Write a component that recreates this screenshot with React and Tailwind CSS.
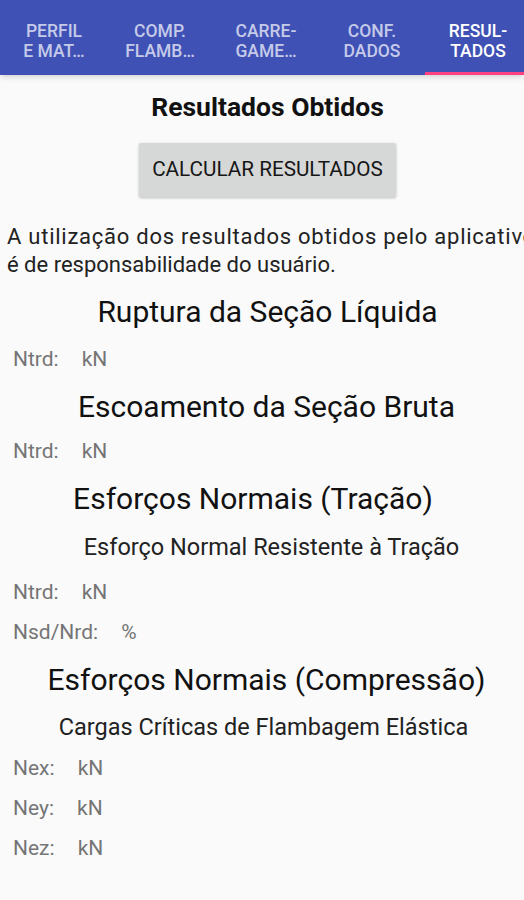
import React from "react";

const tabs = [
  { l1: "PERFIL", l2: "E MAT…" },
  { l1: "COMP.", l2: "FLAMB…" },
  { l1: "CARRE-", l2: "GAME…" },
  { l1: "CONF.", l2: "DADOS" },
  { l1: "RESUL-", l2: "TADOS", active: true },
];

const Row = ({ label, unit, className = "" }) => (
  <div className={`flex items-center h-[40px] pl-[13px] text-[21px] text-[#757575] ${className}`}>
    <span>{label}</span>
    <span className="ml-[23px]">{unit}</span>
  </div>
);

const Heading = ({ children, className = "" }) => (
  <h2 className={`h-[36px] leading-[36px] text-center text-[30px] text-[#111] whitespace-nowrap ${className}`}>
    {children}
  </h2>
);

const SubHeading = ({ children, className = "" }) => (
  <h3 className={`h-[30px] leading-[30px] text-center text-[23.5px] text-[#222] whitespace-nowrap ${className}`}>
    {children}
  </h3>
);

export default function App() {
  return (
    <div
      className="w-[524px] h-[900px] overflow-hidden bg-[#fafafa]"
      style={{ fontFamily: "Roboto, 'Liberation Sans', sans-serif" }}
    >
      {/* Tabs */}
      <div className="h-[75px] bg-[#3f51b5] flex pl-[1px] overflow-hidden shadow-md relative z-10">
        {tabs.map((t, i) => (
          <div
            key={i}
            className={`w-[106px] shrink-0 flex flex-col items-center justify-center pt-[9px] text-[17.5px] font-medium leading-[20px] ${
              t.active
                ? "text-white border-b-[3px] border-[#ff4081]"
                : "text-[#c5cae9] border-b-[3px] border-transparent"
            }`}
          >
            <span>{t.l1}</span>
            <span>{t.l2}</span>
          </div>
        ))}
      </div>

      {/* Title */}
      <h1 className="mt-[17px] pl-[11px] h-[30px] leading-[30px] text-center text-[26.5px] font-bold text-[#111]">
        Resultados Obtidos
      </h1>

      {/* Button */}
      <div className="mt-[21px] pl-[11px] flex justify-center">
        <button className="w-[257px] h-[54px] bg-[#d6d7d7] rounded-[2px] shadow-[0_1px_3px_rgba(0,0,0,0.25)] text-[20.7px] text-[#161616]">
          CALCULAR RESULTADOS
        </button>
      </div>

      {/* Disclaimer */}
      <p className="mt-[26px] pl-[7px] text-[22px] leading-[28px] text-[#222] whitespace-nowrap overflow-hidden">
        <span className="tracking-[0.75px]">A utilização dos resultados obtidos pelo aplicativo</span>
        <br />é de responsabilidade do usuário.
      </p>

      <Heading className="mt-[15px] pl-[11px]">Ruptura da Seção Líquida</Heading>
      <Row label="Ntrd:" unit="kN" className="mt-[10px]" />

      <Heading className="mt-[9px] pl-[9px]">Escoamento da Seção Bruta</Heading>
      <Row label="Ntrd:" unit="kN" className="mt-[7px]" />

      <Heading className="mt-[9px] pr-[18px]">Esforços Normais (Tração)</Heading>
      <SubHeading className="mt-[15px] pl-[19px]">Esforço Normal Resistente à Tração</SubHeading>
      <Row label="Ntrd:" unit="kN" className="mt-[11px]" />
      <Row label="Nsd/Nrd:" unit="%" />

      <Heading className="mt-[9px] pl-[9px]">Esforços Normais (Compressão)</Heading>
      <SubHeading className="mt-[14px] pl-[3px]">Cargas Críticas de Flambagem Elástica</SubHeading>
      <Row label="Nex:" unit="kN" className="mt-[7px]" />
      <Row label="Ney:" unit="kN" />
      <Row label="Nez:" unit="kN" />
    </div>
  );
}
